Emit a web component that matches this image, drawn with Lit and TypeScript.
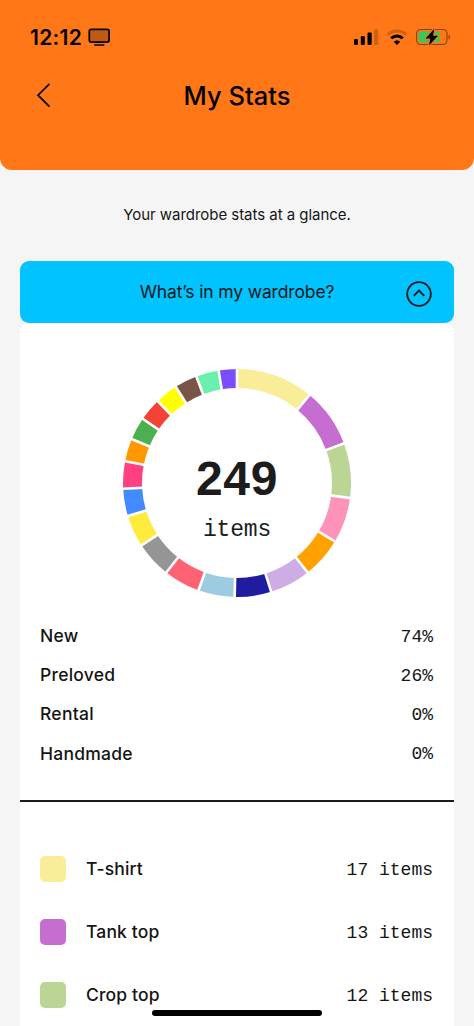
import { LitElement, html, svg, css } from "lit";
import { customElement } from "lit/decorators.js";

interface Category {
  count: number;
  color: string;
}

const categories: Category[] = [
  { count: 17, color: "#f9ed99" },
  { count: 13, color: "#c66dd2" },
  { count: 12, color: "#bbd694" },
  { count: 10, color: "#ff92b8" },
  { count: 9, color: "#ffa200" },
  { count: 9, color: "#cdade3" },
  { count: 8, color: "#1f1c9f" },
  { count: 8, color: "#9dcce0" },
  { count: 8, color: "#ff6272" },
  { count: 8, color: "#959595" },
  { count: 7, color: "#ffeb3b" },
  { count: 6, color: "#448aff" },
  { count: 6, color: "#ff4081" },
  { count: 5, color: "#ff9800" },
  { count: 5, color: "#4caf50" },
  { count: 5, color: "#f44336" },
  { count: 5, color: "#ffff00" },
  { count: 5, color: "#795548" },
  { count: 5, color: "#69f0ae" },
  { count: 4, color: "#7c4dff" },
];

const origins = [
  { name: "New", share: "74%" },
  { name: "Preloved", share: "26%" },
  { name: "Rental", share: "0%" },
  { name: "Handmade", share: "0%" },
];

const kinds = [
  { name: "T-shirt", amount: "17 items", cls: "yellow" },
  { name: "Tank top", amount: "13 items", cls: "purple" },
  { name: "Crop top", amount: "12 items", cls: "green" },
];

@customElement("donut-chart")
export class DonutChart extends LitElement {
  static styles = css`
    :host { display: grid; width: 228px; height: 228px; }
    svg, .label { grid-area: 1 / 1; }
    .label { display: flex; flex-direction: column; align-items: center; padding-top: 82px; color: #1c1c1c; }
    .total { font: 700 48px/56px "Liberation Sans", sans-serif; letter-spacing: 0.6px; }
    .unit { font: 400 23px/28px "Liberation Mono", monospace; margin-top: 9px; letter-spacing: -0.2px; }
  `;

  render() {
    const total = categories.reduce((s, c) => s + c.count, 0);
    const at = (n: number, r: number) => {
      const a = (n / total) * 2 * Math.PI;
      return `${(114 + r * Math.sin(a)).toFixed(2)} ${(114 - r * Math.cos(a)).toFixed(2)}`;
    };
    let from = 0;
    const arcs = [];
    const gaps = [];
    for (const c of categories) {
      const to = from + c.count;
      arcs.push(svg`<path fill=${c.color} d="M${at(from, 114)}A114 114 0 0 1 ${at(to, 114)}L${at(to, 95)}A95 95 0 0 0 ${at(from, 95)}Z"></path>`);
      gaps.push(svg`<path stroke="#fff" stroke-width="2.6" d="M${at(from, 94)}L${at(from, 115)}"></path>`);
      from = to;
    }
    return html`
      <svg width="228" height="228" viewBox="0 0 228 228">${arcs}${gaps}</svg>
      <div class="label"><span class="total">249</span><span class="unit">items</span></div>
    `;
  }
}

@customElement("app-root")
export class AppRoot extends LitElement {
  static styles = css`
    :host {
      display: block; position: relative; box-sizing: border-box; width: 474px; height: 1026px;
      overflow: hidden; background: #f5f5f5; color: #151515; font-family: Inter, sans-serif;
    }
    svg { display: block; }
    span { white-space: nowrap; }
    header { height: 170px; box-sizing: border-box; border-radius: 0 0 12px 12px; background: #ff7717; color: #000; padding-top: 24px; }
    .status { display: flex; align-items: center; height: 26px; padding: 0 24px 0 30px; }
    .time { font-size: 21px; font-weight: 600; line-height: 26px; width: 58px; letter-spacing: 0.3px; padding-top: 2px; }
    .signals { margin-left: auto; }
    .nav { display: grid; grid-template-columns: 60px 1fr 60px; align-items: center; height: 40px; margin-top: 26px; }
    .back { padding-left: 36px; margin-top: -3px; }
    .title { text-align: center; font-size: 25.5px; line-height: 32px; font-weight: 450; letter-spacing: 0; }
    .intro { text-align: center; font-size: 15px; line-height: 20px; margin: 35px 0 0; letter-spacing: -0.04px; }
    .panel-head {
      display: grid; grid-template-columns: 48px 1fr 48px; align-items: center; margin: 35.5px 20px 0; height: 62.5px;
      border-radius: 9px; background: #00c3ff;
    }
    .panel-head .heading { grid-column: 2; text-align: center; font-size: 17.5px; letter-spacing: -0.14px; }
    .panel-head svg { margin: 4px 0 0 -1.5px; }
    .card { margin: 0 20px; height: 710px; border-radius: 9px 9px 0 0; background: #fff; }
    .chart { display: flex; justify-content: center; padding-top: 45.5px; }
    .origins { padding: 19.5px 20px 0; }
    .row { display: flex; align-items: center; height: 39.2px; justify-content: space-between; }
    .name { font-size: 17.5px; font-weight: 500; letter-spacing: 0.25px; }
    .value { font: 400 18px/24px "Liberation Mono", monospace; padding: 2px 1px 0 0; }
    .rule { height: 2px; background: #1c1c1c; margin-top: 27.2px; }
    .kinds { padding: 35px 20px 0; }
    .kind { display: flex; align-items: center; height: 63.2px; }
    .kind .name { margin-left: 20px; flex: 1; letter-spacing: 0.15px; }
    .swatch { width: 26px; height: 26px; border-radius: 5px; }
    .yellow { background: #f9ed99; }
    .purple { background: #c66dd2; }
    .green { background: #bbd694; }
    .home { position: absolute; left: 152px; bottom: 10px; width: 170px; height: 6px; border-radius: 3px; background: #000; }
  `;

  render() {
    return html`
      <header>
        <div class="status">
          <span class="time">12:12</span>
          <svg width="23" height="20" viewBox="0 0 23 20">
            <rect x="1.3" y="2.3" width="19.8" height="12.8" rx="2" fill="#c05a12" stroke="#000" stroke-width="1.7"></rect>
            <path d="M6.8 17.9H15.8" stroke="#000" stroke-width="1.5" stroke-linecap="round"></path>
          </svg>
          <svg class="signals" width="98" height="20" viewBox="352 27 98 20">
            <rect x="354" y="39" width="4" height="6" rx="1.2"></rect>
            <rect x="360.8" y="36" width="4" height="9" rx="1.2"></rect>
            <rect x="367.5" y="32.6" width="4.2" height="12.4" rx="1.2"></rect>
            <rect x="374" y="29.3" width="4.2" height="15.7" rx="1.2" fill="#cf6113"></rect>
            <g fill="none" stroke="#000" stroke-width="2.9">
              <path d="M387.8 34.6A13.4 13.4 0 0 1 406.2 34.6" stroke="#cf6113"></path>
              <path d="M391.2 38.3A8.4 8.4 0 0 1 402.8 38.3"></path>
            </g>
            <path d="M397 45L393.7 41.8A4.8 4.8 0 0 1 400.3 41.8Z"></path>
            <rect x="416.6" y="29.5" width="30.4" height="15" rx="4.2" fill="none" stroke="#87420f" stroke-width="1.1"></rect>
            <path d="M448.6 34.8Q450.1 35.6 450.1 37.2T448.6 39.6Z" fill="#87420f"></path>
            <rect x="418.6" y="31.5" width="21.4" height="11" rx="2.4" fill="#31cb5c"></rect>
            <path d="M434.3 28.8L425.5 38.4H430.3L429 45.5L438 35.8H433Z" stroke="#ff7717" stroke-width="2" paint-order="stroke"></path>
          </svg>
        </div>
        <div class="nav">
          <svg class="back" width="16" height="26" viewBox="0 0 16 26"><path d="M13.5 1.8L2 13.2L13.5 24.6" fill="none" stroke="#000" stroke-width="1.7"></path></svg>
          <span class="title">My Stats</span>
        </div>
      </header>
      <p class="intro"><span>Your wardrobe stats at a glance.</span></p>
      <div class="panel-head">
        <span class="heading">What’s in my wardrobe?</span>
        <svg width="28" height="28" viewBox="0 0 28 28" fill="none" stroke="#151515" stroke-width="1.8">
          <circle cx="14" cy="14" r="11.8"></circle><path d="M8.7 15.9L14 10.5L19.3 15.9"></path>
        </svg>
      </div>
      <div class="card">
        <div class="chart"><donut-chart></donut-chart></div>
        <div class="origins">
          ${origins.map((o) => html`<div class="row"><span class="name">${o.name}</span><span class="value">${o.share}</span></div>`)}
        </div>
        <div class="rule"></div>
        <div class="kinds">
          ${kinds.map((k) => html`<div class="kind"><i class="swatch ${k.cls}"></i><span class="name">${k.name}</span><span class="value">${k.amount}</span></div>`)}
        </div>
      </div>
      <div class="home"></div>
    `;
  }
}
